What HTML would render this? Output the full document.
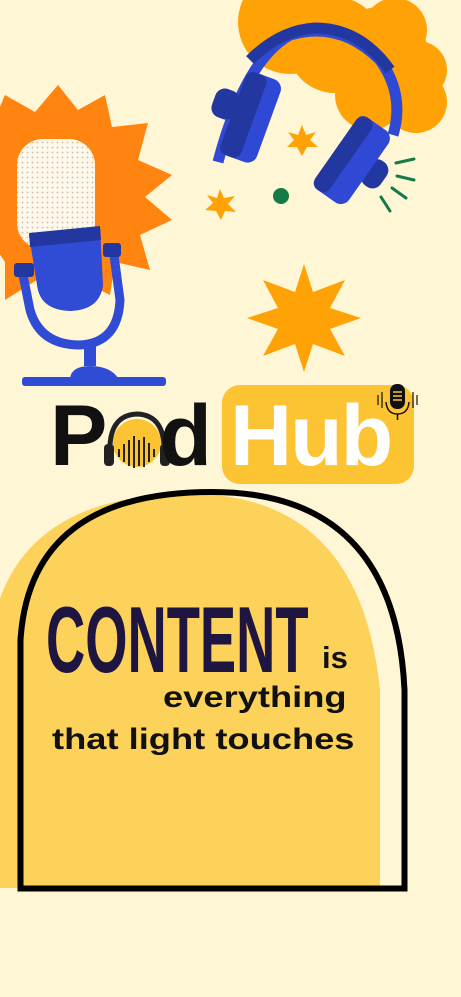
<!DOCTYPE html>
<html><head><meta charset="utf-8"><style>
html,body{margin:0;padding:0;}
body{width:461px;height:997px;background:#fff6d6;position:relative;overflow:hidden;font-family:"Liberation Sans",sans-serif;}
.abs{position:absolute;}
</style></head><body>
<svg class="abs" style="left:0;top:0" width="461" height="997" viewBox="0 0 461 997">
<defs>
<pattern id="dots" width="5" height="5" patternUnits="userSpaceOnUse"><rect width="5" height="5" fill="#fdf8ee"/><circle cx="2.5" cy="2.5" r="0.9" fill="#d9b98a"/></pattern>
</defs>
<!-- cloud -->
<g fill="#ffa205">
<circle cx="290" cy="22" r="52"/><circle cx="335" cy="45" r="48"/><circle cx="380" cy="55" r="48"/><circle cx="395" cy="30" r="32"/><circle cx="418" cy="70" r="29"/><circle cx="416" cy="102" r="31"/><circle cx="370" cy="95" r="35"/>
</g>
<!-- starburst -->
<polygon fill="#ff8510" points="58,85 78,110 105,95 112,127 148,123 138,160 172,175 145,197 172,220 140,235 150,270 115,262 110,295 80,280 60,300 40,278 5,300 5,262 -10,240 -10,130 5,95 35,112"/>
<!-- mic capsule -->
<rect x="17" y="139" width="78" height="110" rx="26" fill="url(#dots)"/>
<!-- mic body -->
<path d="M29 235 L100 227 L103 285 Q100 310 70 311 Q40 310 37 285 Z" fill="#304bd4"/>
<polygon points="29,233 100,226 101,240 30,247" fill="#2238a0"/>
<!-- stand -->
<path d="M22 270 L30 310 Q40 345 80 345 Q118 343 120 300 L113 248" fill="none" stroke="#304bd4" stroke-width="9" stroke-linecap="round"/>
<rect x="14" y="263" width="20" height="14" rx="3" fill="#2238a0"/>
<rect x="103" y="243" width="18" height="14" rx="3" fill="#2238a0"/>
<rect x="84" y="344" width="12" height="22" fill="#304bd4"/>
<path d="M70 378 Q72 366 90 366 Q110 366 118 378Z" fill="#304bd4"/>
<rect x="22" y="377" width="144" height="9" rx="3" fill="#304bd4"/>
<!-- headphones band -->
<path d="M218 162 Q245 60 290 35 Q340 20 380 60 Q405 95 393 135" fill="none" stroke="#3049d4" stroke-width="11"/>
<path d="M250 60 Q280 30 315 28 Q360 28 390 70" fill="none" stroke="#2238a0" stroke-width="11"/>
<!-- left earcup -->
<g transform="rotate(20 255 118)">
<rect x="210" y="100" width="25" height="30" rx="10" fill="#2238a0"/>
<rect x="232" y="75" width="38" height="88" rx="10" fill="#3049d4"/>
<rect x="232" y="75" width="22" height="88" rx="8" fill="#2238a0"/>
</g>
<!-- right earcup -->
<g transform="rotate(35 355 160)">
<rect x="368" y="145" width="22" height="30" rx="10" fill="#2238a0"/>
<rect x="333" y="118" width="40" height="88" rx="10" fill="#3049d4"/>
<rect x="333" y="118" width="18" height="88" rx="8" fill="#2238a0"/>
</g>
<!-- green lines -->
<g stroke="#147a48" stroke-width="3" stroke-linecap="round">
<line x1="396" y1="163" x2="414" y2="159"/><line x1="397" y1="176" x2="414" y2="180"/><line x1="392" y1="188" x2="406" y2="198"/><line x1="381" y1="197" x2="390" y2="211"/>
</g>
<circle cx="281" cy="196" r="8" fill="#147a48"/>
<!-- small stars -->
<polygon fill="#ffa205" points="302,125 306,135 316,132 310,140 318,147 307,147 302,156 297,147 287,147 294,140 288,132 298,135"/>
<polygon fill="#ffa205" points="220,189 224,198 235,196 228,204 236,212 225,211 221,220 216,211 205,210 213,203 207,195 217,198"/>
<!-- big star -->
<polygon fill="#ffa205" points="304,264 313,292 345,280 330,308 361,318 330,329 345,356 313,344 304,372 295,344 263,356 278,329 247,318 278,308 263,280 295,292"/>
<!-- logo yellow box -->
<rect x="222" y="385" width="192" height="99" rx="18" fill="#fcc332"/>
<!-- arch fill -->
<path d="M-10 888 L-10 640 Q10 494 190 494 Q360 494 380 690 L380 888 Z" fill="#fdd25a"/>
<!-- arch outline -->
<path d="M20.5 888.5 L20.5 640 Q30 492 212 492 Q395 492 404.5 690 L404.5 888.5 Z" fill="none" stroke="#000" stroke-width="6"/>
<!-- headphone o -->
<circle cx="137" cy="443" r="24" fill="#fcc332"/>
<path d="M110 455 Q108 415 137 414 Q166 415 164 455" fill="none" stroke="#222" stroke-width="5"/>
<rect x="104" y="444" width="10" height="22" rx="4" fill="#222"/>
<rect x="160" y="444" width="10" height="22" rx="4" fill="#222"/>
<g stroke="#222" stroke-width="2">
<line x1="119" y1="449" x2="119" y2="457"/><line x1="124" y1="444" x2="124" y2="462"/><line x1="129" y1="440" x2="129" y2="466"/><line x1="134" y1="436" x2="134" y2="468"/><line x1="139" y1="440" x2="139" y2="466"/><line x1="144" y1="437" x2="144" y2="467"/><line x1="149" y1="443" x2="149" y2="462"/><line x1="154" y1="449" x2="154" y2="457"/>
</g>
<!-- small mic icon -->
<rect x="390" y="384" width="15" height="25" rx="7" fill="#111"/>
<g stroke="#fcc332" stroke-width="1.5"><line x1="393" y1="392" x2="402" y2="392"/><line x1="393" y1="396" x2="402" y2="396"/><line x1="393" y1="400" x2="402" y2="400"/></g>
<path d="M386 402 Q387 414 397.5 414 Q408 414 409 402" fill="none" stroke="#111" stroke-width="1.5"/>
<line x1="397.5" y1="414" x2="397.5" y2="420" stroke="#111" stroke-width="1.5"/>
<g stroke="#111" stroke-width="1.2"><line x1="378" y1="395" x2="378" y2="405"/><line x1="382" y1="392" x2="382" y2="408"/><line x1="413" y1="392" x2="413" y2="408"/><line x1="417" y1="395" x2="417" y2="405"/></g>
</svg>
<div class="abs" style="left:50px;top:386px;font-size:86px;font-weight:bold;color:#111;letter-spacing:-2px;line-height:100px;">P<span style="display:inline-block;width:54px"></span>d</div>
<div class="abs" style="left:230px;top:386px;font-size:86px;font-weight:bold;color:#fff;letter-spacing:-2px;line-height:100px;">Hub</div>
<div class="abs" style="left:46px;top:592px;font-size:94px;font-weight:bold;color:#1e1640;line-height:96px;transform:scaleX(0.578);transform-origin:0 0;white-space:nowrap;">CONTENT</div>
<div class="abs" style="left:322px;top:640px;font-size:31px;font-weight:bold;color:#111;line-height:36px;">is</div>
<div class="abs" style="left:163px;top:680px;font-size:30px;font-weight:bold;color:#111;line-height:36px;transform:scaleX(1.21);transform-origin:0 0;white-space:nowrap;">everything</div>
<div class="abs" style="left:52px;top:722px;font-size:30px;font-weight:bold;color:#111;line-height:36px;white-space:nowrap;transform:scaleX(1.21);transform-origin:0 0;">that light touches</div>
</body></html>
